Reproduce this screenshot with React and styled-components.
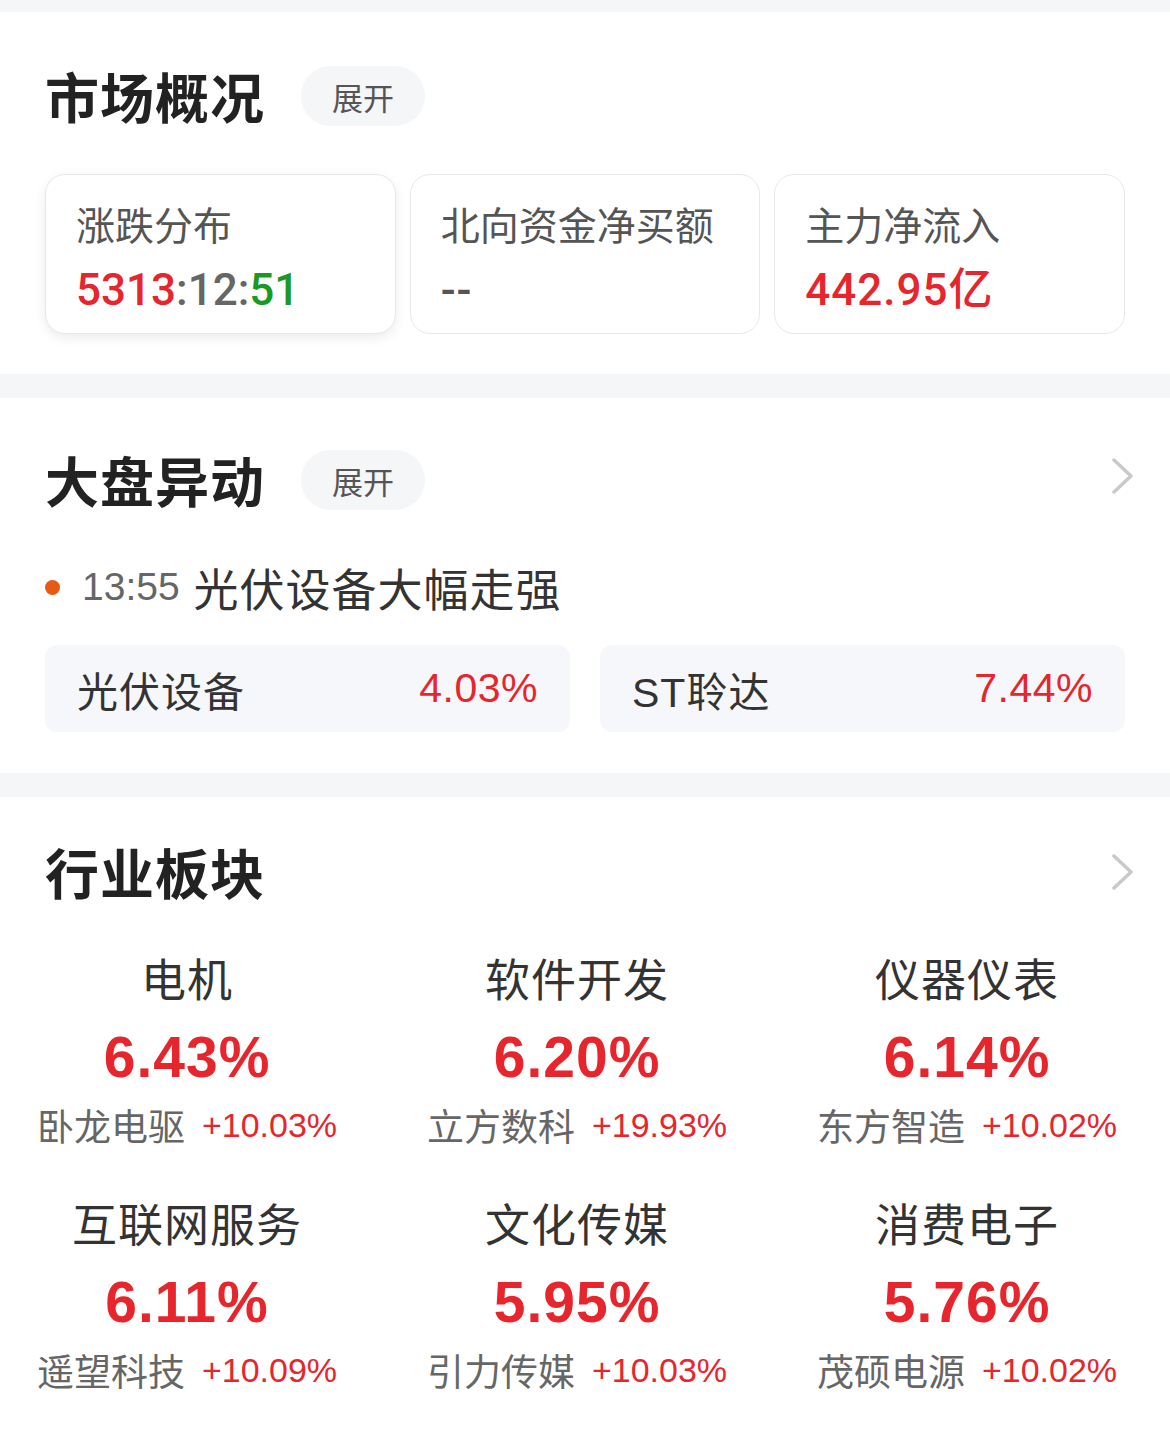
import React from "react";
import styled, { createGlobalStyle } from "styled-components";

const Global = createGlobalStyle`
  html, body { margin: 0; padding: 0; background: #fff; }
  body { font-family: "Noto Sans CJK SC", "Noto Sans", sans-serif; color: #222; }
  * { box-sizing: border-box; }
`;

const CJK = `"Noto Sans CJK SC", sans-serif`;
const NUM = `"Liberation Sans", "Noto Sans CJK SC", sans-serif`;
const RNUM = `Roboto, "Noto Sans CJK SC", sans-serif`;
const RED = "#e6262c";

const Page = styled.div`
  width: 1170px;
  background: #fff;
  overflow: hidden;
`;

const Band = styled.div`
  height: ${(p) => p.$h}px;
  background: #f5f6f8;
`;

const Section = styled.section`
  padding-top: ${(p) => p.$pt}px;
  padding-bottom: ${(p) => p.$pb}px;
`;

const Header = styled.div`
  display: flex;
  align-items: center;
  height: 60px;
  padding: 0 35px 0 45px;
`;

const Title = styled.h2`
  margin: 0;
  font-family: ${CJK};
  font-size: 54px;
  line-height: 60px;
  font-weight: 700;
  color: #222;
  letter-spacing: 1px;
`;

const Pill = styled.span`
  margin-left: 36px;
  height: 60px;
  padding: 0 31px;
  border-radius: 30px;
  background: #f5f6f7;
  display: flex;
  align-items: center;
  font-family: ${CJK};
  font-size: 31px;
  color: #555;
`;

const Chevron = styled.svg`
  margin-left: auto;
  margin-top: ${(p) => p.$dy || 0}px;
  width: 24px;
  height: 36px;
`;

const Cards = styled.div`
  display: grid;
  grid-template-columns: repeat(3, 1fr);
  gap: 14px;
  padding: 0 45px;
  margin-top: 48px;
`;

const Card = styled.div`
  height: 160px;
  border-radius: 20px;
  border: 1px solid #e7e8ea;
  background: #fff;
  padding: 27px 28px 0 30px;
  display: flex;
  flex-direction: column;
  box-shadow: ${(p) => (p.$raised ? "0 4px 12px rgba(0,0,0,0.08)" : "none")};
`;

const CardLabel = styled.div`
  font-family: ${CJK};
  font-size: 39px;
  line-height: 42px;
  color: #555;
  white-space: nowrap;
`;

const CardValue = styled.div`
  margin-top: 21px;
  font-family: ${RNUM};
  font-size: 44px;
  line-height: 50px;
  font-weight: 500;
  letter-spacing: ${(p) => (p.$tight ? 0 : 1)}px;
  color: ${(p) => p.$color || RED};
  white-space: nowrap;
`;

const Seg = styled.span`
  color: ${(p) => p.$color};
`;

const EventLine = styled.div`
  display: flex;
  align-items: center;
  height: 50px;
  margin-top: 52px;
  padding-left: 45px;
`;

const Dot = styled.span`
  width: 15px;
  height: 15px;
  border-radius: 50%;
  background: #e85a12;
  flex: none;
`;

const Time = styled.span`
  margin-left: 22px;
  font-family: ${NUM};
  font-size: 39px;
  color: #666;
`;

const EventText = styled.span`
  margin-left: 14px;
  font-family: ${CJK};
  font-size: 45px;
  letter-spacing: 1px;
  color: #333;
`;

const Chips = styled.div`
  display: grid;
  grid-template-columns: 1fr 1fr;
  gap: 30px;
  padding: 0 45px;
  margin-top: 33px;
`;

const Chip = styled.div`
  height: 87px;
  border-radius: 12px;
  background: #f5f7fa;
  display: flex;
  align-items: center;
  justify-content: space-between;
  padding: 0 32px;
`;

const ChipName = styled.span`
  font-family: ${NUM};
  font-size: 41px;
  letter-spacing: 1px;
  color: #333;
`;

const ChipPct = styled.span`
  font-family: ${NUM};
  font-size: 41px;
  letter-spacing: 0.5px;
  color: ${RED};
`;

const Grid = styled.div`
  display: grid;
  grid-template-columns: repeat(3, 1fr);
  row-gap: 48px;
  width: 1170px;
  margin-left: -8px;
  margin-top: 48px;
`;

const Cell = styled.div`
  display: flex;
  flex-direction: column;
  align-items: center;
`;

const SectorName = styled.div`
  font-family: ${CJK};
  font-size: 45px;
  line-height: 56px;
  letter-spacing: 1px;
  color: #333;
`;

const SectorPct = styled.div`
  margin-top: 19px;
  font-family: ${NUM};
  font-size: 57px;
  line-height: 64px;
  font-weight: 700;
  color: ${RED};
  letter-spacing: 1px;
`;

const SubRow = styled.div`
  margin-top: 14px;
  display: flex;
  align-items: center;
  height: 44px;
  white-space: nowrap;
`;

const Leader = styled.span`
  font-family: ${CJK};
  font-size: 37px;
  color: #666;
`;

const LeaderPct = styled.span`
  margin-left: 17px;
  font-family: ${NUM};
  font-size: 34px;
  color: ${RED};
`;

const ChevronIcon = ({ dy }) => (
  <Chevron viewBox="0 0 24 36" $dy={dy}>
    <path d="M3 2 L20 18 L3 34" fill="none" stroke="#c9c9c9" strokeWidth="3.5" strokeLinecap="round" strokeLinejoin="round" />
  </Chevron>
);

const sectors = [
  { name: "电机", pct: "6.43%", lead: "卧龙电驱", lp: "+10.03%" },
  { name: "软件开发", pct: "6.20%", lead: "立方数科", lp: "+19.93%" },
  { name: "仪器仪表", pct: "6.14%", lead: "东方智造", lp: "+10.02%" },
  { name: "互联网服务", pct: "6.11%", lead: "遥望科技", lp: "+10.09%" },
  { name: "文化传媒", pct: "5.95%", lead: "引力传媒", lp: "+10.03%" },
  { name: "消费电子", pct: "5.76%", lead: "茂硕电源", lp: "+10.02%" },
];

export default function App() {
  return (
    <Page>
      <Global />
      <Band $h={12} />
      <Section $pt={54} $pb={40}>
        <Header>
          <Title>市场概况</Title>
          <Pill>展开</Pill>
        </Header>
        <Cards>
          <Card $raised>
            <CardLabel>涨跌分布</CardLabel>
            <CardValue $tight>
              <Seg $color={RED}>5313</Seg>
              <Seg $color="#666">:12:</Seg>
              <Seg $color="#1a9a24">51</Seg>
            </CardValue>
          </Card>
          <Card>
            <CardLabel>北向资金净买额</CardLabel>
            <CardValue $color="#555">--</CardValue>
          </Card>
          <Card>
            <CardLabel>主力净流入</CardLabel>
            <CardValue>442.95亿</CardValue>
          </Card>
        </Cards>
      </Section>
      <Band $h={24} />
      <Section $pt={52} $pb={41}>
        <Header>
          <Title>大盘异动</Title>
          <Pill>展开</Pill>
          <ChevronIcon dy={-8} />
        </Header>
        <EventLine>
          <Dot />
          <Time>13:55</Time>
          <EventText>光伏设备大幅走强</EventText>
        </EventLine>
        <Chips>
          <Chip>
            <ChipName>光伏设备</ChipName>
            <ChipPct>4.03%</ChipPct>
          </Chip>
          <Chip>
            <ChipName>ST聆达</ChipName>
            <ChipPct>7.44%</ChipPct>
          </Chip>
        </Chips>
      </Section>
      <Band $h={24} />
      <Section $pt={45} $pb={47}>
        <Header>
          <Title>行业板块</Title>
          <ChevronIcon />
        </Header>
        <Grid>
          {sectors.map((s) => (
            <Cell key={s.name}>
              <SectorName>{s.name}</SectorName>
              <SectorPct>{s.pct}</SectorPct>
              <SubRow>
                <Leader>{s.lead}</Leader>
                <LeaderPct>{s.lp}</LeaderPct>
              </SubRow>
            </Cell>
          ))}
        </Grid>
      </Section>
    </Page>
  );
}
